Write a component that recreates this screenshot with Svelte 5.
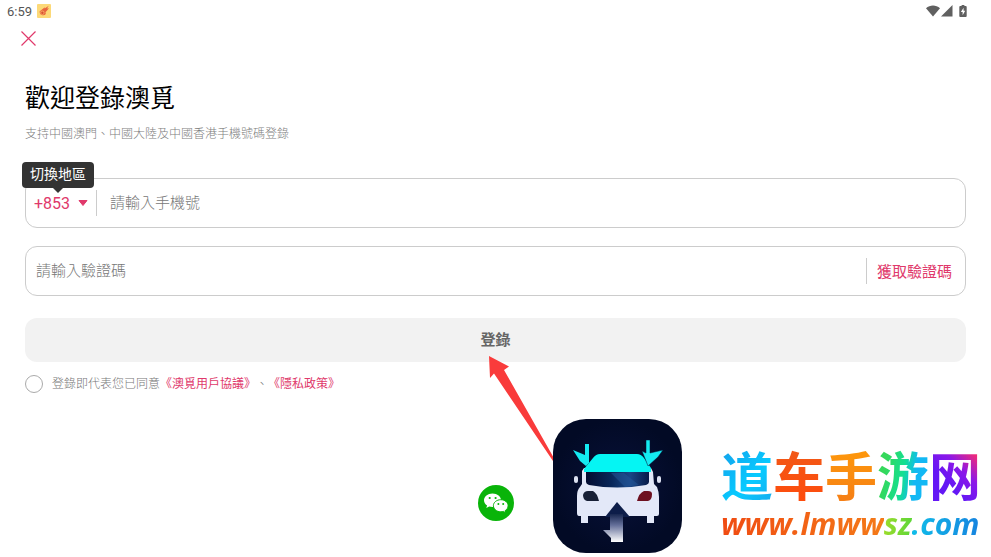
<script lang="ts">
	let region = $state('+853');
	let phone = $state('');
	let code = $state('');
	let agreed = $state(false);

	const regions = ['+853', '+86', '+852'];

	const siteName = [
		{ char: '道', tone: 'sky' },
		{ char: '车', tone: 'red' },
		{ char: '手', tone: 'orange' },
		{ char: '游', tone: 'green' },
		{ char: '网', tone: 'violet' }
	];

	const handleSubmit = (event: SubmitEvent) => {
		event.preventDefault();
	};
</script>

<div class="screen">
	<div class="status-bar">
		<span class="clock">6:59</span>
		<svg class="app-badge" viewBox="0 0 14 14" aria-hidden="true">
			<rect width="14" height="14" rx="1" fill="#fcd978" />
			<path d="M2.500 7.500 7.800 3.200 7.600 4.600 11.800 1.800 10 4.600 12 4.200 8.500 8.200 8.800 10A3.600 3.600 0 0 1 2.500 7.500Z" fill="#e8653f" />
			<circle cx="5.400" cy="8.700" r="2.100" fill="#f4a95f" />
			<circle cx="5.400" cy="8.700" r="1.200" fill="#d94f35" />
		</svg>
		<div class="status-icons">
			<svg width="14" height="12" viewBox="0 0 14 12" aria-hidden="true">
				<path d="M0 3.200C4-.4 10-.4 14 3.200L7 11.500Z" fill="#606060" />
			</svg>
			<svg width="12" height="12" viewBox="0 0 12 12" aria-hidden="true">
				<path d="M11.500 0V11.500H0Z" fill="#606060" />
			</svg>
			<svg class="battery" width="8" height="12" viewBox="0 0 8 13" aria-hidden="true">
				<path d="M2.500 0h3v1.200H7a1 1 0 0 1 1 1V12a1 1 0 0 1-1 1H1a1 1 0 0 1-1-1V2.200a1 1 0 0 1 1-1h1.500Z" fill="#606060" />
				<path d="M4.600 3 1.700 7.500h1.900V11l2.800-4.700H4.600Z" fill="#fff" />
			</svg>
		</div>
	</div>

	<div class="toolbar">
		<button type="button" class="close" aria-label="關閉">
			<svg width="15" height="15" viewBox="0 0 15 15" aria-hidden="true">
				<path d="M.5.500 14.500 14.500M14.500.500.500 14.500" stroke="#e0396b" stroke-width="1.200" />
			</svg>
		</button>
	</div>

	<main>
		<h1>歡迎登錄澳覓</h1>
		<p class="hint">支持中國澳門、中國大陸及中國香港手機號碼登錄</p>

		<form onsubmit={handleSubmit}>
			<div class="field phone-field">
				<div class="tooltip" role="tooltip">切換地區</div>
				<div class="region">
					<select bind:value={region} aria-label="切換地區">
						{#each regions as item}
							<option value={item}>{item}</option>
						{/each}
					</select>
					<svg width="10" height="6" viewBox="0 0 10 6" aria-hidden="true">
						<path d="M1 .5h8L5 5.500Z" fill="#e0396b" stroke="#e0396b" stroke-linejoin="round" />
					</svg>
				</div>
				<input type="tel" bind:value={phone} placeholder="請輸入手機號" aria-label="請輸入手機號" />
			</div>

			<div class="field code-field">
				<input type="text" bind:value={code} placeholder="請輸入驗證碼" aria-label="請輸入驗證碼" />
				<button type="button" class="get-code">獲取驗證碼</button>
			</div>

			<button type="submit" class="login">登錄</button>

			<div class="terms">
				<input id="agree" type="checkbox" bind:checked={agreed} />
				<span>
					<label for="agree">登錄即代表您已同意</label><a href="#terms">《澳覓用戶協議》</a>、<a
						href="#privacy">《隱私政策》</a
					>
				</span>
			</div>
		</form>
	</main>

	<footer>
		<button type="button" class="wechat" aria-label="微信登錄">
			<svg width="36" height="36" viewBox="0 0 36 36" aria-hidden="true">
				<circle cx="18" cy="18" r="18" fill="#09b409" />
				<path d="M14.500 8.500C9.700 8.500 6 11.500 6 15.300c0 2.200 1.200 4 3.100 5.300L8.300 23l2.900-1.500c1.100.3 2.100.5 3.300.5 4.800 0 8.600-3 8.600-6.700S19.300 8.500 14.500 8.500Z" fill="#fff" />
				<path d="M22.800 14.700c-4.200 0-7.400 2.700-7.400 6s3.200 6.100 7.400 6.100c.9 0 1.800-.2 2.600-.4l2.500 1.400-.7-2.200c1.800-1.100 2.900-2.900 2.900-4.900 0-3.300-3.200-6-7.300-6Z" fill="#fff" stroke="#09b409" />
				<g fill="#09b409">
					<circle cx="11.700" cy="13" r="1.100" />
					<circle cx="17.600" cy="13" r="1.100" />
					<circle cx="20.400" cy="19" r="1" />
					<circle cx="25.200" cy="19" r="1" />
				</g>
			</svg>
		</button>
	</footer>

	<aside class="watermark">
		<svg class="pointer" width="68" height="108" viewBox="0 0 68 108" aria-hidden="true">
			<path d="M0 0 20 10.500 15 14 66 104V108L5 17.500 1 22Z" fill="#f93b3b" />
		</svg>
		<svg class="app-icon" width="129" height="134" viewBox="0 0 129 134" aria-hidden="true">
			<defs>
				<radialGradient id="night">
					<stop offset="0" stop-color="#08113a" />
					<stop offset="1" stop-color="#020a25" />
				</radialGradient>
				<linearGradient id="glass">
					<stop offset="0" stop-color="#030c31" />
					<stop offset=".4" stop-color="#082659" />
					<stop offset=".7" stop-color="#1a4686" />
					<stop offset="1" stop-color="#071a48" />
				</linearGradient>
				<linearGradient id="road" x2="0" y2="1">
					<stop offset="0" stop-color="#17264f" />
					<stop offset=".4" stop-color="#65709a" />
					<stop offset="1" stop-color="#fff" />
				</linearGradient>
			</defs>
			<rect width="129" height="134" rx="33" fill="url(#night)" />
			<path d="M31 49h67l2 4 1 12 3 3q2 5 2 10v17q0 2-2 2h-3v7h-7v-7H35v7h-7v-7h-2q-2 0-2-3V77q0-6 3-9l2-3V52Z" fill="#e3e8f8" />
			<path d="M47 35h37q4 0 7 4l7 10v4H31v-3l9-11q3-4 7-4Z" fill="#05f5f3" />
			<path d="M33 53h63v10q0 2-3 3-29 5-57 0-3-1-3-3Z" fill="url(#glass)" />
			<path d="M58 54h13l15 12-14 2Z" fill="#24579a" opacity=".5" />
			<rect x="21" y="57" width="4" height="7" rx="2" fill="#dce1f1" />
			<rect x="104" y="57" width="4" height="7" rx="2" fill="#dce1f1" />
			<path d="M30 76q1-4 5-4h5q4 2 6 10H34q-4-1-4-6Z" fill="#182036" />
			<path d="M99 75q0-3-4-3h-4q-5 2-7 10h11q4-1 4-7Z" fill="#6d1020" />
			<path d="M64 83 77 98H52Z" fill="#0d1d49" />
			<path d="M57 95h13v28H58v-4l-8-8h7Z" fill="url(#road)" />
			<path d="M32 25h4v19l-3 3-6-5-7-11 12 5Z" fill="#14eaf1" />
			<path d="M93 21h4v13l13-3-5 7-10 9-6-15 4 2Z" fill="#14eaf1" stroke="#061033" stroke-width=".5" />
		</svg>
		<div class="site">
			<div class="site-name">
				{#each siteName as part}<span class={part.tone}>{part.char}</span>{/each}
			</div>
			<div class="site-url">
				<span class="url-host">www.lmww</span><span class="url-mid">sz</span><span class="url-end">.com</span>
			</div>
		</div>
	</aside>
</div>

<style>
	:global(body) {
		background: #fff;
	}

	.screen {
		position: relative;
		display: flex;
		flex-direction: column;
		min-height: 100vh;
		box-sizing: border-box;
		color: #000;
		font-family: Roboto, 'Noto Sans CJK TC', sans-serif;
		font-weight: 300;
	}

	button,
	input,
	select {
		margin: 0;
		padding: 0;
		border: 0;
		background: none;
		font: inherit;
		color: inherit;
	}

	button {
		cursor: pointer;
	}

	svg {
		display: block;
	}

	.status-bar {
		display: flex;
		align-items: center;
		gap: 5px;
		height: 22px;
		padding: 0 24px 0 7px;
	}

	.clock {
		font-size: 13px;
		font-weight: 400;
		color: #555;
	}

	.app-badge {
		width: 14px;
		height: 14px;
	}

	.status-icons {
		display: flex;
		align-items: center;
		gap: 1px;
		margin-left: auto;
	}

	.battery {
		margin-left: 5px;
	}

	.toolbar {
		display: flex;
		align-items: center;
		height: 32px;
		padding: 0 21px;
	}

	main {
		padding: 26px 25px 0;
	}

	h1 {
		margin: 0;
		font-size: 25px;
		line-height: 38px;
		font-weight: 400;
	}

	.hint {
		margin: 7px 0 0;
		font-size: 12px;
		line-height: 18px;
		color: #808080;
	}

	form {
		display: flex;
		flex-direction: column;
		gap: 18px;
		margin-top: 35px;
	}

	.field {
		position: relative;
		display: flex;
		align-items: center;
		height: 50px;
		box-sizing: border-box;
		border: 1px solid #ccc;
		border-radius: 12px;
	}

	.field input {
		flex: 1;
		min-width: 0;
		height: 100%;
		outline: none;
		font-size: 15px;
	}

	.field input::placeholder {
		color: #777;
		opacity: 1;
	}

	.phone-field input {
		padding-left: 13px;
	}

	.code-field input {
		padding-left: 10px;
	}

	.tooltip {
		position: absolute;
		left: -4px;
		top: -17px;
		padding: 0 8px 2px;
		border-radius: 4px;
		background: #333;
		color: #fff;
		font-size: 14px;
		line-height: 24px;
		font-weight: 400;
	}

	.tooltip::after {
		content: '';
		position: absolute;
		left: 50%;
		top: 100%;
		margin-left: -5px;
		border: 5px solid transparent;
		border-top-color: #333;
		border-bottom: 0;
	}

	.region {
		display: flex;
		align-items: center;
		gap: 7px;
		height: 26px;
		padding: 0 8px;
		border-right: 1px solid #ccc;
		color: #e0396b;
	}

	.region select {
		appearance: none;
		width: 37px;
		font-size: 16px;
		font-weight: 400;
		outline: none;
	}

	.get-code {
		height: 26px;
		padding: 0 13px 2px 10px;
		border-left: 1px solid #ccc;
		font-size: 15px;
		font-weight: 400;
		color: #e0396b;
	}

	.login {
		height: 44px;
		margin-top: 4px;
		padding-bottom: 4px;
		border-radius: 12px;
		background: #f2f2f2;
		font-size: 15px;
		font-weight: 700;
		color: #666;
	}

	.terms {
		display: flex;
		align-items: center;
		gap: 9px;
		margin-top: -5px;
		font-size: 12px;
		line-height: 18px;
		color: #777;
		text-spacing-trim: space-all;
	}

	.terms input {
		appearance: none;
		width: 18px;
		height: 18px;
		box-sizing: border-box;
		border: 1px solid #aaa;
		border-radius: 50%;
	}

	.terms input:checked {
		border: 5px solid #e0396b;
	}

	.terms a {
		color: #e0396b;
		font-weight: 400;
		text-decoration: none;
	}

	footer {
		display: flex;
		justify-content: center;
		margin-top: auto;
		padding: 24px 0 36px;
	}

	.watermark {
		position: absolute;
		right: 10px;
		bottom: 4px;
		display: flex;
		align-items: flex-end;
		height: 197px;
		pointer-events: none;
	}

	.pointer {
		align-self: flex-start;
		margin-right: -4px;
	}

	.app-icon {
		position: relative;
	}

	.site {
		margin: 0 0 10px 39px;
	}

	.site-name {
		display: flex;
		font-family: 'Noto Sans CJK SC', sans-serif;
		font-size: 52px;
		line-height: 62px;
		font-weight: 700;
	}

	.site-name span,
	.site-url span {
		background-clip: text;
		-webkit-background-clip: text;
		color: transparent;
	}

	.sky {
		background-image: linear-gradient(135deg, #159de9, #08caff 60%, #16a9ed);
	}

	.red {
		background-image: linear-gradient(#f05a18, #ff4b0c);
	}

	.orange {
		background-image: linear-gradient(#ff9b0a, #f57d16);
	}

	.green {
		background-image: linear-gradient(100deg, #35d85b 20%, #13df93 50%, #12b8f4 70%);
	}

	.violet {
		background-image: linear-gradient(45deg, #6417f5 35%, #8c18e8 60%, #f02b78 85%);
	}

	.site-url {
		font-family: 'Open Sans', sans-serif;
		font-size: 30px;
		line-height: 38px;
		font-weight: 700;
		font-style: italic;
	}

	.url-host {
		background-image: linear-gradient(90deg, #f04b12, #f47a18);
	}

	.url-mid {
		background-image: linear-gradient(90deg, #9bdc2c, #5ed638);
	}

	.url-end {
		background-image: linear-gradient(90deg, #10bde9, #1684df);
	}
</style>
